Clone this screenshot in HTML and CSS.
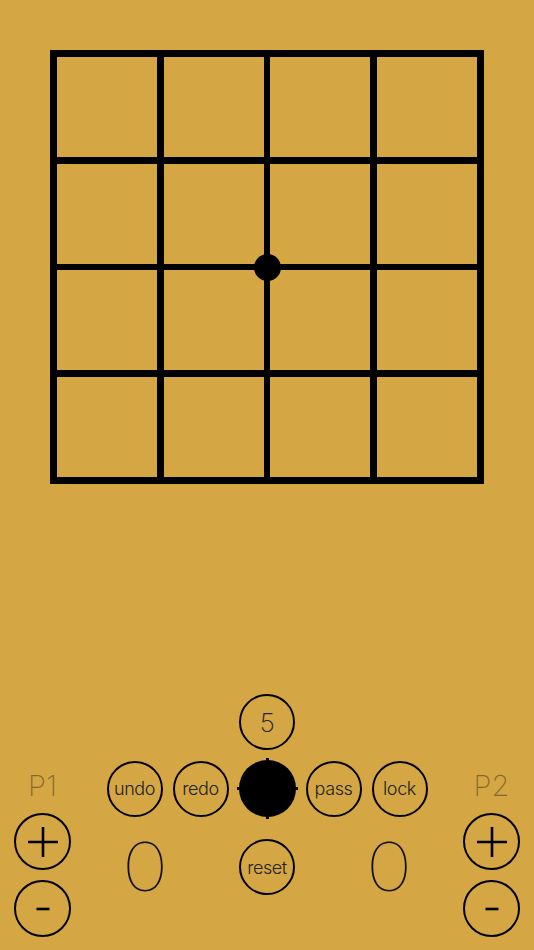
FILE: index.html
```html
<!DOCTYPE html>
<html>
<head>
<meta charset="utf-8">
<link rel="stylesheet" href="styles.css">
</head>
<body>
<div class="board">
  <div class="cell"></div><div class="cell"></div><div class="cell"></div><div class="cell"></div>
  <div class="cell"></div><div class="cell"></div><div class="cell"></div><div class="cell"></div>
  <div class="cell"></div><div class="cell"></div><div class="cell"></div><div class="cell"></div>
  <div class="cell"></div><div class="cell"></div><div class="cell"></div><div class="cell"></div>
  <div class="star"></div>
</div>
<div class="controls">
  <div class="side">
    <div class="plabel">P1</div>
    <div class="circle big"><svg width="32" height="32" viewBox="0 0 32 32"><path d="M1 16H31M16 1V31" stroke="#000" stroke-width="2.6" fill="none"/></svg></div>
    <div class="circle big"><svg width="32" height="32" viewBox="0 0 32 32"><path d="M9.5 16H22.5" stroke="#000" stroke-width="2.6" fill="none"/></svg></div>
  </div>
  <div class="center">
    <div class="row">
      <div class="circle num">5</div>
    </div>
    <div class="row mid">
      <div class="circle">undo</div>
      <div class="circle">redo</div>
      <div class="stone"><span class="tick t"></span><span class="tick b"></span><span class="tick l"></span><span class="tick r"></span></div>
      <div class="circle">pass</div>
      <div class="circle">lock</div>
    </div>
    <div class="row bottom">
      <div class="zero">0</div>
      <div class="circle">reset</div>
      <div class="zero">0</div>
    </div>
  </div>
  <div class="side">
    <div class="plabel">P2</div>
    <div class="circle big"><svg width="32" height="32" viewBox="0 0 32 32"><path d="M1 16H31M16 1V31" stroke="#000" stroke-width="2.6" fill="none"/></svg></div>
    <div class="circle big"><svg width="32" height="32" viewBox="0 0 32 32"><path d="M9.5 16H22.5" stroke="#000" stroke-width="2.6" fill="none"/></svg></div>
  </div>
</div>
</body>
</html>
```
FILE: styles.css
```css
html, body {
  margin: 0;
  padding: 0;
}
body {
  background: #d4a644;
  width: 534px;
  height: 950px;
  overflow: hidden;
  font-family: Inter, "Liberation Sans", sans-serif;
}
.board {
  position: relative;
  margin: 50px 0 0 50px;
  width: 434px;
  height: 434px;
  box-sizing: border-box;
  background: #000;
  padding: 7px;
  display: grid;
  grid-template-columns: repeat(4, 1fr);
  grid-template-rows: repeat(4, 1fr);
  gap: 6.5px;
}
.cell {
  background: #d4a644;
}
.star {
  position: absolute;
  left: 203.5px;
  top: 203.5px;
  width: 27px;
  height: 27px;
  border-radius: 50%;
  background: #000;
}
.controls {
  margin-top: 210px;
  padding: 0 14px;
  display: flex;
  justify-content: space-between;
  align-items: flex-start;
}
.side {
  width: 57px;
  margin-top: 75px;
  display: flex;
  flex-direction: column;
  align-items: center;
  gap: 10px;
}
.plabel {
  height: 34px;
  line-height: 34px;
  font-size: 29px;
  font-weight: 200;
  color: rgba(0, 0, 0, 0.38);
}
.center {
  width: 320px;
  display: flex;
  flex-direction: column;
  align-items: center;
}
.row {
  display: flex;
  justify-content: center;
  align-items: center;
  gap: 10px;
}
.mid {
  margin-top: 10px;
}
.bottom {
  margin-top: 22px;
  gap: 56px;
}
.circle {
  width: 56px;
  height: 56px;
  box-sizing: border-box;
  border: 2.5px solid #000;
  border-radius: 50%;
  display: flex;
  align-items: center;
  justify-content: center;
  font-size: 18px;
  font-weight: 300;
  color: #222;
  letter-spacing: -0.4px;
}
.circle.big {
  width: 57px;
  height: 57px;
}
.circle.num {
  font-size: 26px;
  font-weight: 200;
}
.stone {
  position: relative;
  width: 57px;
  height: 57px;
  border-radius: 50%;
  background: #000;
}
.tick {
  position: absolute;
  background: #000;
}
.tick.t { left: 27px; top: -2px; width: 3px; height: 4px; }
.tick.b { left: 27px; bottom: -2px; width: 3px; height: 4px; }
.tick.l { top: 27px; left: -2px; width: 4px; height: 3px; }
.tick.r { top: 27px; right: -2px; width: 4px; height: 3px; }
.zero {
  width: 76px;
  height: 56px;
  line-height: 56px;
  text-align: center;
  font-size: 67px;
  font-weight: 130;
  color: #111;
  transform: scaleX(1.18);
}
```
